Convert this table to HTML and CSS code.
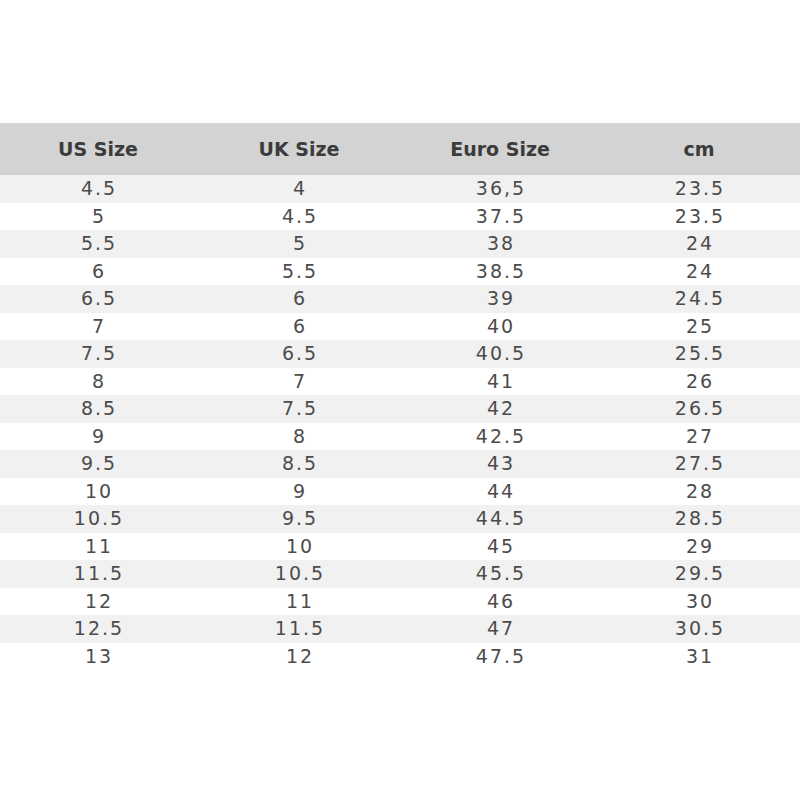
FILE: index.html
```html
<!DOCTYPE html>
<html>
<head>
<meta charset="utf-8">
<link rel="stylesheet" href="styles.css">
</head>
<body>
<div class="page">
  <div class="size-table">
    <div class="row head"><div>US Size</div><div>UK Size</div><div>Euro Size</div><div>cm</div></div>
    <div class="row"><div>4.5</div><div>4</div><div>36,5</div><div>23.5</div></div>
    <div class="row"><div>5</div><div>4.5</div><div>37.5</div><div>23.5</div></div>
    <div class="row"><div>5.5</div><div>5</div><div>38</div><div>24</div></div>
    <div class="row"><div>6</div><div>5.5</div><div>38.5</div><div>24</div></div>
    <div class="row"><div>6.5</div><div>6</div><div>39</div><div>24.5</div></div>
    <div class="row"><div>7</div><div>6</div><div>40</div><div>25</div></div>
    <div class="row"><div>7.5</div><div>6.5</div><div>40.5</div><div>25.5</div></div>
    <div class="row"><div>8</div><div>7</div><div>41</div><div>26</div></div>
    <div class="row"><div>8.5</div><div>7.5</div><div>42</div><div>26.5</div></div>
    <div class="row"><div>9</div><div>8</div><div>42.5</div><div>27</div></div>
    <div class="row"><div>9.5</div><div>8.5</div><div>43</div><div>27.5</div></div>
    <div class="row"><div>10</div><div>9</div><div>44</div><div>28</div></div>
    <div class="row"><div>10.5</div><div>9.5</div><div>44.5</div><div>28.5</div></div>
    <div class="row"><div>11</div><div>10</div><div>45</div><div>29</div></div>
    <div class="row"><div>11.5</div><div>10.5</div><div>45.5</div><div>29.5</div></div>
    <div class="row"><div>12</div><div>11</div><div>46</div><div>30</div></div>
    <div class="row"><div>12.5</div><div>11.5</div><div>47</div><div>30.5</div></div>
    <div class="row"><div>13</div><div>12</div><div>47.5</div><div>31</div></div>
  </div>
</div>
</body>
</html>
```

FILE: styles.css
```css
html, body {
  margin: 0;
  padding: 0;
  background: #ffffff;
}

.page {
  width: 800px;
  height: 800px;
  padding-top: 123px;
  box-sizing: border-box;
}

.size-table {
  width: 800px;
  font-family: "DejaVu Sans", Verdana, sans-serif;
}

.row {
  display: grid;
  grid-template-columns: 196px 206px 196px 1fr;
  height: 27.5px;
  align-items: center;
  text-align: center;
  font-size: 19px;
  letter-spacing: 2px;
  color: #4c4c4c;
  line-height: 1;
}

.row > div {
  padding-left: 2px;
}

.row:nth-child(even) {
  background: #f1f1f1;
}

.row.head {
  height: 52px;
  background: #d3d3d3;
  font-weight: bold;
  letter-spacing: 0;
  color: #3b3b3b;
}

.row.head > div {
  padding-left: 0;
}
```
